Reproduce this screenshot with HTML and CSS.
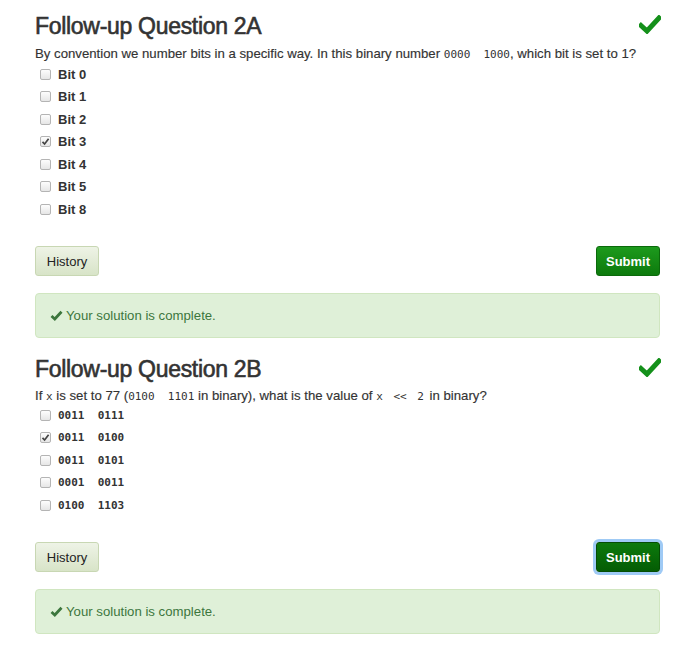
FILE: index.html
```html
<!DOCTYPE html>
<html>
<head>
<meta charset="utf-8">
<link rel="stylesheet" href="styles.css">
</head>
<body>
<div class="page">
  <section class="question q1">
    <div class="head">
      <h3>Follow-up Question 2A</h3>
      <svg class="done" width="22" height="19" viewBox="0 0 22 19"><path d="M2 10.5 L8 16 L20 3" fill="none" stroke="#14901a" stroke-width="5" stroke-linecap="square"/></svg>
    </div>
    <p class="prompt">By convention we number bits in a specific way. In this binary number <code>0000  1000</code>, which bit is set to 1?</p>
    <ul class="options">
      <li><span class="box"></span><span class="lbl">Bit 0</span></li>
      <li><span class="box"></span><span class="lbl">Bit 1</span></li>
      <li><span class="box"></span><span class="lbl">Bit 2</span></li>
      <li><span class="box checked"><svg width="9" height="9" viewBox="0 0 9 9"><path d="M1.5 4.8 L3.6 7 L7.6 1.8" fill="none" stroke="#444" stroke-width="1.7"/></svg></span><span class="lbl">Bit 3</span></li>
      <li><span class="box"></span><span class="lbl">Bit 4</span></li>
      <li><span class="box"></span><span class="lbl">Bit 5</span></li>
      <li><span class="box"></span><span class="lbl">Bit 8</span></li>
    </ul>
    <div class="actions">
      <button class="btn history">History</button>
      <button class="btn submit">Submit</button>
    </div>
    <div class="alert"><svg class="tick" width="13" height="11" viewBox="0 0 13 11"><path d="M1.5 6 L4.8 9 L11.5 1.8" fill="none" stroke="#3c763d" stroke-width="2.8"/></svg>Your solution is complete.</div>
  </section>

  <section class="question q2">
    <div class="head">
      <h3>Follow-up Question 2B</h3>
      <svg class="done" width="22" height="19" viewBox="0 0 22 19"><path d="M2 10.5 L8 16 L20 3" fill="none" stroke="#14901a" stroke-width="5" stroke-linecap="square"/></svg>
    </div>
    <p class="prompt">If <code>x</code> is set to 77 (<code>0100  1101</code> in binary), what is the value of <code class="wide">x &lt;&lt; 2</code> in binary?</p>
    <ul class="options mono">
      <li><span class="box"></span><span class="lbl">0011  0111</span></li>
      <li><span class="box checked"><svg width="9" height="9" viewBox="0 0 9 9"><path d="M1.5 4.8 L3.6 7 L7.6 1.8" fill="none" stroke="#444" stroke-width="1.7"/></svg></span><span class="lbl">0011  0100</span></li>
      <li><span class="box"></span><span class="lbl">0011  0101</span></li>
      <li><span class="box"></span><span class="lbl">0001  0011</span></li>
      <li><span class="box"></span><span class="lbl">0100  1103</span></li>
    </ul>
    <div class="actions">
      <button class="btn history">History</button>
      <button class="btn submit focused">Submit</button>
    </div>
    <div class="alert"><svg class="tick" width="13" height="11" viewBox="0 0 13 11"><path d="M1.5 6 L4.8 9 L11.5 1.8" fill="none" stroke="#3c763d" stroke-width="2.8"/></svg>Your solution is complete.</div>
  </section>
</div>
</body>
</html>
```
FILE: styles.css
```css
* { box-sizing: border-box; }
body {
  margin: 0;
  background: #fff;
  font-family: "Liberation Sans", Arial, sans-serif;
  font-size: 13px;
  color: #333;
}
.page {
  width: 625px;
  margin-left: 35px;
  padding-top: 13px;
}
.head {
  display: flex;
  justify-content: space-between;
  align-items: center;
  height: 26px;
}
h3 {
  margin: 0;
  font-size: 23px;
  font-weight: normal;
  line-height: 26px;
  letter-spacing: -0.3px;
  color: #333;
  -webkit-text-stroke: 0.6px #333;
}
.done { margin-right: -1px; margin-top: -4px; }
.prompt {
  margin: 6px 0 0;
  line-height: 18px;
  font-size: 13.2px;
  -webkit-text-stroke: 0.15px #333;
}
code {
  font-family: "DejaVu Sans Mono", monospace;
  font-size: 11px;
  white-space: pre;
  color: #333;
  -webkit-text-stroke: 0;
}
code.wide { word-spacing: 4px; margin-right: 2px; }
.options {
  list-style: none;
  margin: -1px 0 0;
  padding: 0;
}
.options li {
  display: flex;
  align-items: center;
  height: 22.5px;
}
.box {
  width: 11px;
  height: 11px;
  margin-left: 5px;
  margin-right: 7px;
  border: 1px solid #b4b4b4;
  border-radius: 2px;
  background: linear-gradient(#fdfdfd, #e6e6e6);
  display: flex;
  align-items: center;
  justify-content: center;
}
.box svg { display: block; }
.lbl { font-weight: bold; font-size: 13px; }
.mono .lbl {
  font-family: "DejaVu Sans Mono", monospace;
  font-size: 11px;
  white-space: pre;
}
.actions {
  display: flex;
  justify-content: space-between;
  margin-top: 25.5px;
}
.btn {
  height: 30px;
  width: 64px;
  border-radius: 3px;
  font-family: "Liberation Sans", Arial, sans-serif;
  font-size: 13px;
  padding: 0;
}
.history {
  background: linear-gradient(#eef3e6, #d8e4c8);
  border: 1px solid #c8d7b3;
  color: #222;
}
.submit {
  background: linear-gradient(#1d9a1d, #0d7a0d);
  border: 1px solid #0b6a0b;
  color: #fff;
  font-weight: bold;
}
.submit.focused {
  background: linear-gradient(#0c7a0c, #045c04);
  border-color: #044d04;
  box-shadow: 0 0 0 3px #9fcaf5;
}
.alert {
  margin-top: 17px;
  height: 45px;
  display: flex;
  align-items: center;
  padding-left: 14px;
  background: #dff0d8;
  border: 1px solid #d0e6c0;
  border-radius: 4px;
  color: #3c763d;
  font-size: 13.2px;
}
.tick {
  display: block;
  margin-right: 3px;
  margin-top: -1px;
}
.q2 { margin-top: 18px; }
.q2 .prompt { margin-top: 5px; }
.q2 .options { margin-top: -2px; }
```
